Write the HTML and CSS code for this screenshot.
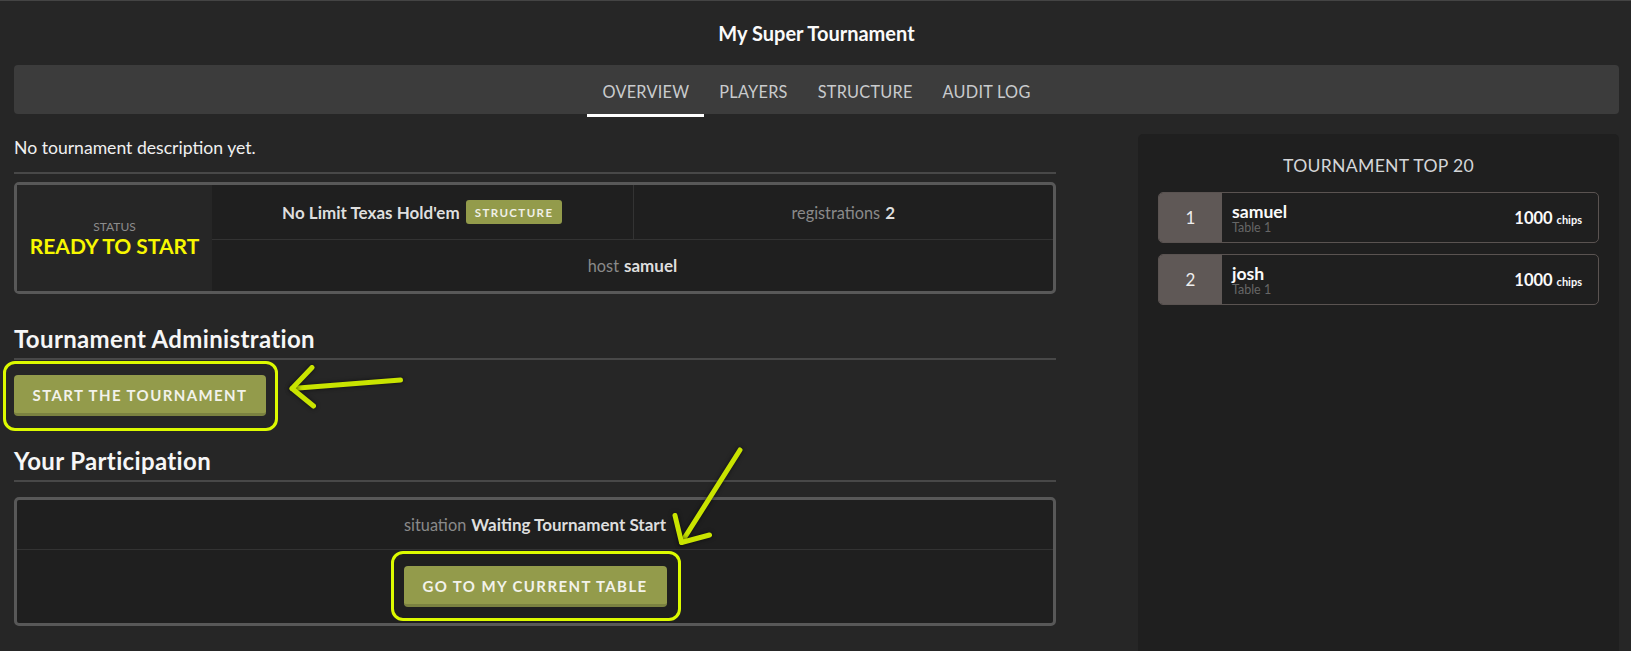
FILE: index.html
```html
<!DOCTYPE html>
<html>
<head>
<meta charset="utf-8">
<title>My Super Tournament</title>
<link rel="stylesheet" href="styles.css">
</head>
<body>
<div class="page">
  <h1 class="title">My Super Tournament</h1>
  <nav class="tabs">
    <a class="tab active">OVERVIEW</a>
    <a class="tab">PLAYERS</a>
    <a class="tab">STRUCTURE</a>
    <a class="tab">AUDIT LOG</a>
  </nav>
  <div class="layout">
    <main class="main">
      <p class="desc">No tournament description yet.</p>
      <hr class="rule first">
      <div class="status-box">
        <div class="status-cell">
          <div class="status-label">STATUS</div>
          <div class="status-value">READY TO START</div>
        </div>
        <div class="info-cell game"><span class="strong">No Limit Texas Hold'em</span><span class="badge">STRUCTURE</span></div>
        <div class="info-cell regs"><span class="muted">registrations</span> <span class="strong">2</span></div>
        <div class="info-cell host"><span class="muted">host</span> <span class="strong">samuel</span></div>
      </div>

      <h2 class="section-title admin">Tournament Administration</h2>
      <hr class="rule">
      <div class="btn-wrap start">
        <button class="btn">START THE TOURNAMENT</button>
        <span class="annot annot-start"></span>
      </div>

      <h2 class="section-title part">Your Participation</h2>
      <hr class="rule">
      <div class="part-box">
        <div class="part-row"><span class="muted">situation</span> <span class="strong">Waiting Tournament Start</span></div>
        <div class="part-row action">
          <div class="btn-wrap">
            <button class="btn">GO TO MY CURRENT TABLE</button>
            <span class="annot annot-table"></span>
          </div>
        </div>
      </div>
    </main>
    <aside class="sidebar">
      <h3 class="side-title">TOURNAMENT TOP 20</h3>
      <div class="ranking">
        <div class="rank-row">
          <div class="rank">1</div>
          <div class="who"><div class="name">samuel</div><div class="table">Table 1</div></div>
          <div class="chips">1000 <small>chips</small></div>
        </div>
        <div class="rank-row">
          <div class="rank">2</div>
          <div class="who"><div class="name">josh</div><div class="table">Table 1</div></div>
          <div class="chips">1000 <small>chips</small></div>
        </div>
      </div>
    </aside>
  </div>
  <svg class="arrows" width="1631" height="651" viewBox="0 0 1631 651">
    <g class="arrow-lines">
      <path d="M400.5 380 L292 388.5"/>
      <path d="M312 367.5 L292 388.5 L313.5 406"/>
      <path d="M740 450 L681.5 542.5"/>
      <path d="M675 515.5 L681.5 542.5 L709.5 535"/>
    </g>
  </svg>
</div>
</body>
</html>
```
FILE: styles.css
```css
* { box-sizing: border-box; }
html, body { margin: 0; padding: 0; }
body {
  background: #262626;
  color: #e8e8e8;
  font-family: Lato, "Noto Sans", sans-serif;
  border-top: 1px solid #444;
  overflow: hidden;
}
.page {
  position: relative;
  padding: 0 12px 0 14px;
  height: 650px;
}
.title {
  margin: 0;
  padding-top: 20px;
  font-size: 20px;
  line-height: 24px;
  font-weight: 700;
  text-align: center;
  color: #fafafa;
}
.tabs {
  margin-top: 20px;
  height: 49px;
  background: #3c3c3c;
  border-radius: 4px;
  display: flex;
  justify-content: center;
  align-items: stretch;
}
.tab {
  display: flex;
  align-items: center;
  padding: 0 15px;
  font-size: 16.3px;
  letter-spacing: 0.25px;
  color: #c9cbcd;
  height: 52px;
  border-bottom: 3px solid transparent;
  padding-top: 3px;
  white-space: nowrap;
}
.tab.active { border-bottom-color: #fff; }

.layout {
  margin-top: 20px;
  display: grid;
  grid-template-columns: 1042px 1fr;
  column-gap: 82px;
}
.desc {
  margin: 0;
  font-size: 17.6px;
  line-height: 28px;
  color: #f0f0f0;
}
.rule {
  border: 0;
  height: 2px;
  background: #484848;
  margin: 4px 0 0;
}
.rule.first { margin-top: 10px; }

.status-box {
  margin-top: 8px;
  border: 3px solid #585858;
  border-radius: 5px;
  background: #1f1f1f;
  display: grid;
  grid-template-columns: 195px 1fr 1fr;
  grid-template-rows: 55px 51px;
}
.status-cell {
  grid-row: 1 / 3;
  background: #262626;
  display: flex;
  flex-direction: column;
  align-items: center;
  justify-content: center;
  padding-top: 1px;
}
.status-label {
  font-size: 12px;
  line-height: 15px;
  color: #8c8c8c;
}
.status-value {
  font-size: 21px;
  line-height: 24px;
  font-weight: 700;
  color: #f7f700;
}
.info-cell {
  display: flex;
  align-items: center;
  justify-content: center;
  font-size: 16.3px;
  gap: 5px;
}
.info-cell.game, .info-cell.regs { border-bottom: 1px solid #333; }
.info-cell.regs { border-left: 1px solid #333; }
.info-cell.host { grid-column: 2 / 4; padding-bottom: 1px; }
.muted { color: #8a8a8a; }
.strong { font-weight: 700; color: #dedede; font-size: 17px; }
.badge {
  margin-left: 1px;
  background: #939b4b;
  color: #f0f0e6;
  font-size: 11.5px;
  font-weight: 700;
  letter-spacing: 1.4px;
  height: 24px;
  padding: 0 9px;
  border-radius: 3px;
  display: inline-flex;
  align-items: center;
}

.section-title {
  margin: 0;
  font-size: 24px;
  line-height: 30px;
  font-weight: 700;
  letter-spacing: 0.35px;
  color: #f6f6f6;
}
.section-title.admin { margin-top: 30px; }
.section-title.part { margin-top: 30px; }

.btn-wrap {
  position: relative;
  display: inline-block;
}
.btn-wrap.start { margin-top: 15px; display: block; width: max-content; }
.btn {
  display: block;
  font-family: Lato, "Noto Sans", sans-serif;
  font-size: 15px;
  font-weight: 700;
  letter-spacing: 1.4px;
  color: #f2f2ea;
  background: #939b4b;
  border: 0;
  border-bottom: 3px solid #7b8240;
  border-radius: 4px;
  height: 41px;
  padding: 2px 0 0;
  white-space: nowrap;
  text-align: center;
}
.start .btn { width: 252px; }
.action .btn { width: 263px; }
.annot {
  position: absolute;
  border: 3px solid #dcfa00;
  border-radius: 12px;
  pointer-events: none;
}
.annot-start { left: -11px; right: -12px; top: -14px; bottom: -15px; }
.annot-table { left: -13px; right: -14px; top: -15px; bottom: -14px; }

.part-box {
  margin-top: 15px;
  border: 3px solid #585858;
  border-radius: 5px;
  background: #1f1f1f;
}
.part-row {
  height: 50px;
  display: flex;
  align-items: center;
  justify-content: center;
  gap: 5px;
  font-size: 16.3px;
  border-bottom: 1px solid #333;
}
.part-row.action {
  height: 73px;
  border-bottom: 0;
}

.sidebar {
  background: #1f1f1f;
  border-radius: 5px;
  padding: 20px;
  height: 540px;
}
.side-title {
  margin: 0;
  text-align: center;
  font-size: 17.6px;
  line-height: 24px;
  font-weight: 400;
  color: #d4d6d8;
  letter-spacing: 0.3px;
}
.ranking {
  margin-top: 14px;
  display: flex;
  flex-direction: column;
  gap: 11px;
}
.rank-row {
  height: 51px;
  border: 1px solid #5a5351;
  border-radius: 5px;
  display: flex;
  align-items: center;
  overflow: hidden;
}
.rank {
  width: 63px;
  align-self: stretch;
  background: #5f5856;
  display: flex;
  align-items: center;
  justify-content: center;
  font-size: 17px;
  color: #eeeeee;
}
.who {
  flex: 1;
  padding-left: 10px;
  padding-top: 1px;
}
.name {
  font-size: 17.6px;
  line-height: 19px;
  font-weight: 700;
  color: #fafafa;
}
.table {
  font-size: 12.5px;
  line-height: 14px;
  color: #666;
}
.chips {
  padding-right: 16px;
  font-size: 16.5px;
  font-weight: 700;
  color: #fafafa;
}
.chips small {
  font-size: 11px;
  font-weight: 700;
}

.arrows {
  position: absolute;
  left: 0;
  top: -1px;
  pointer-events: none;
}
.arrow-lines path {
  fill: none;
  stroke: #c9e400;
  stroke-width: 5;
  stroke-linecap: round;
  stroke-linejoin: round;
  filter: drop-shadow(0 0 2px rgba(0,0,0,0.6));
}
```
